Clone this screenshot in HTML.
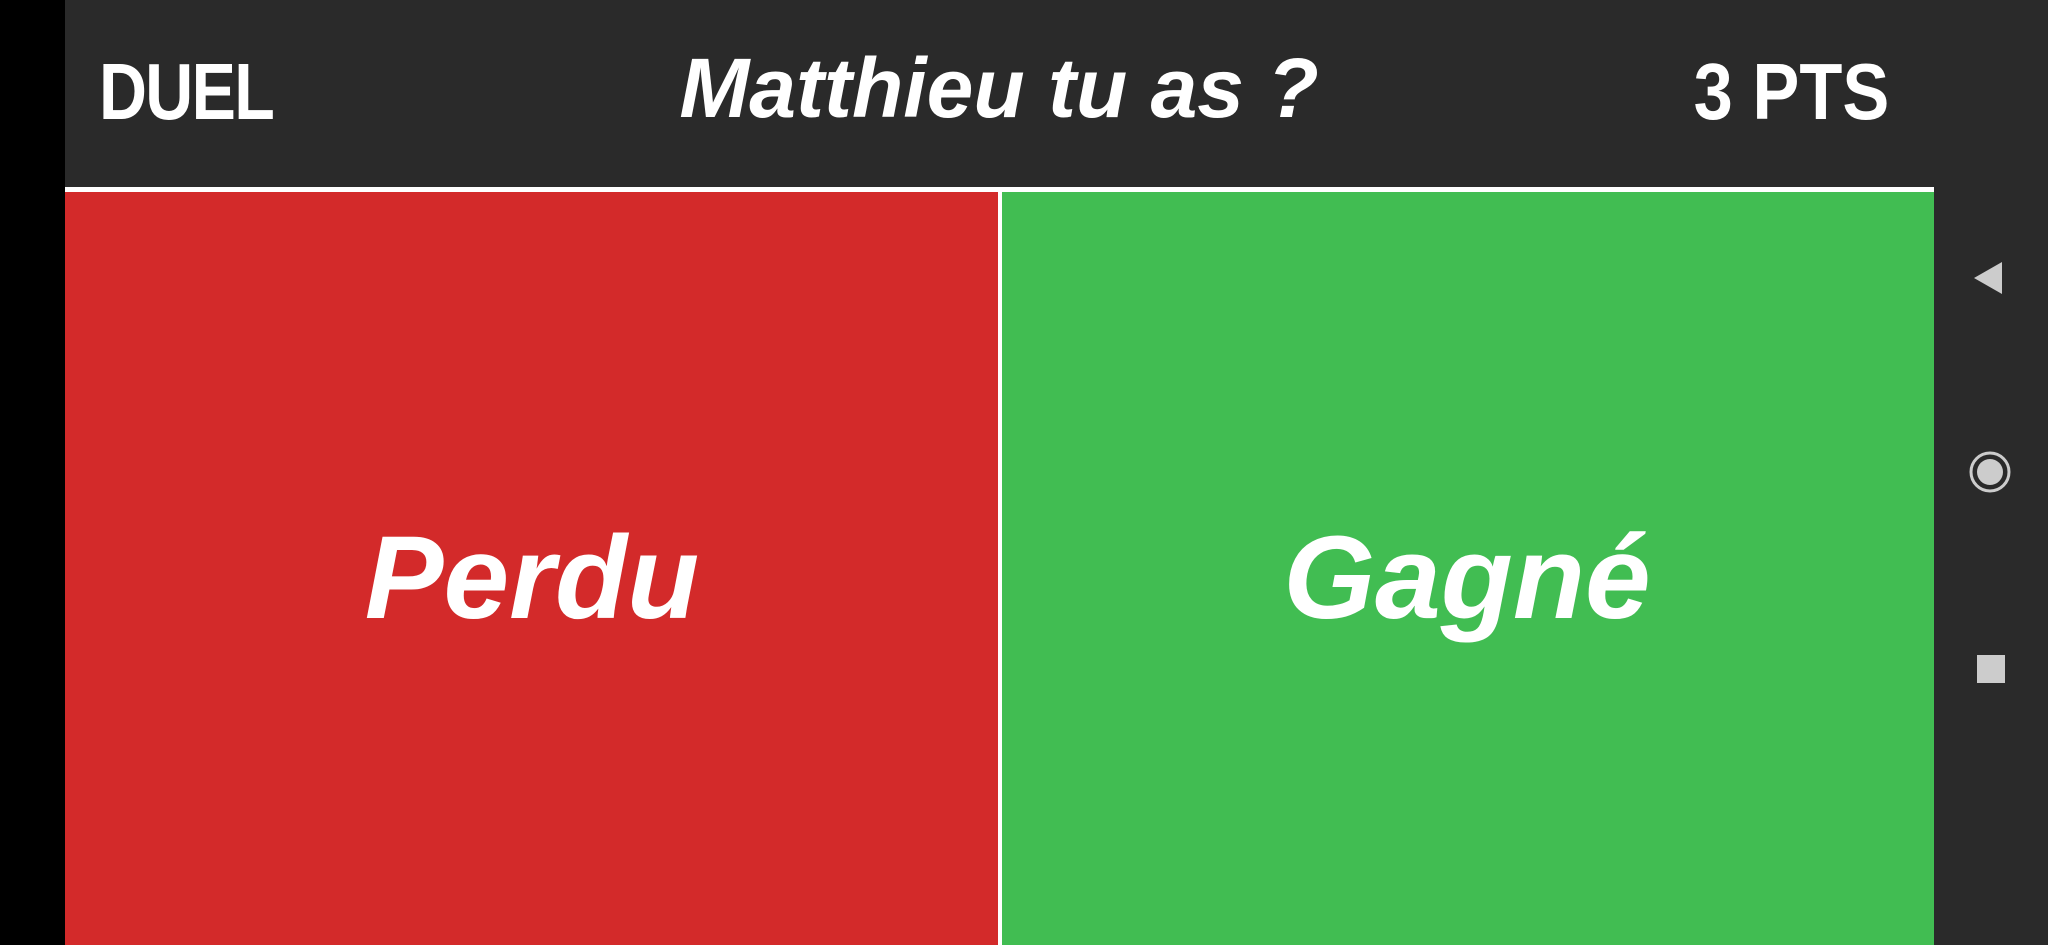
<!DOCTYPE html>
<html><head><meta charset="utf-8"><style>
html,body{margin:0;padding:0;width:2048px;height:945px;overflow:hidden;background:#000;font-family:"Liberation Sans",sans-serif}
.hdr{position:absolute;left:65px;top:0;width:1983px;height:188px;background:#2a2a2a}
.nav{position:absolute;left:1934px;top:188px;width:114px;height:757px;background:#2a2a2a}
.line{position:absolute;left:65px;top:187px;width:1869px;height:5px;background:#fff}
.red{position:absolute;left:65px;top:192px;width:933px;height:753px;background:#d32a2a}
.div{position:absolute;left:998px;top:192px;width:4px;height:753px;background:#fff}
.green{position:absolute;left:1002px;top:192px;width:932px;height:753px;background:#41bd52}
.t{position:absolute;color:#fff;font-weight:bold;white-space:nowrap}
.big{font-style:italic;font-size:118px;transform:translateX(-50%)}
</style></head><body>
<div class="hdr"></div><div class="nav"></div>
<div class="line"></div><div class="red"></div><div class="div"></div><div class="green"></div>
<div class="t" style="left:99px;top:46px;font-size:80px;letter-spacing:-2px;transform:scaleX(0.83);transform-origin:left">DUEL</div>
<div class="t" style="left:999px;top:40px;font-size:84px;font-style:italic;transform:translateX(-50%)">Matthieu tu as ?</div>
<div class="t" style="right:159px;top:46px;font-size:80px;transform:scaleX(0.88);transform-origin:right">3 PTS</div>
<div class="t big" style="left:532px;top:510px">Perdu</div>
<div class="t big" style="left:1467px;top:510px">Gagné</div>
<svg style="position:absolute;left:1970px;top:260px" width="40" height="36"><polygon points="32,2 32,34 4,18" fill="#ccc"/></svg>
<svg style="position:absolute;left:1968px;top:450px" width="44" height="44"><circle cx="22" cy="22" r="19" fill="none" stroke="#ccc" stroke-width="3"/><circle cx="22" cy="22" r="13" fill="#ccc"/></svg>
<div style="position:absolute;left:1977px;top:655px;width:28px;height:28px;background:#ccc"></div>
</body></html>
